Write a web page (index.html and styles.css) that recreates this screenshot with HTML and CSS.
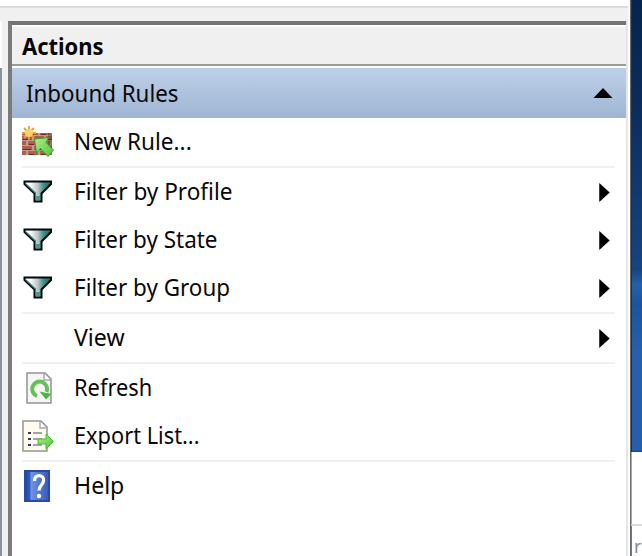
FILE: index.html
```
<!DOCTYPE html>
<html lang="en">
<head>
<meta charset="utf-8">
<title>Actions</title>
<link rel="stylesheet" href="styles.css">
</head>
<body>
<svg width="0" height="0" class="defs">
  <defs>
    <linearGradient id="metal"><stop offset=".2" stop-color="#fff"/><stop offset=".5" stop-color="#bfc5c5"/><stop offset=".72" stop-color="#38908c"/><stop offset="1" stop-color="#216f70"/></linearGradient>
    <linearGradient id="green" x2="1" y2="1"><stop stop-color="#b0f08c"/><stop offset="1" stop-color="#4fc238"/></linearGradient>
    <linearGradient id="blue"><stop stop-color="#1c48ad"/><stop offset=".2" stop-color="#2d5bc2"/><stop offset=".25" stop-color="#6f94e0"/><stop offset="1" stop-color="#3558bb"/></linearGradient>
    <pattern id="bricks" width="12" height="10" patternUnits="userSpaceOnUse">
      <rect width="12" height="10" fill="#b9a097"/><path d="M0 0h10v4H0zM-6 5H4v4h-10zM6 5h10v4H6z" fill="#b0604a"/><path d="M1 3h8v1H1zM7 8h5v1H7z" fill="#65281f"/>
    </pattern>
    <symbol id="funnel" viewBox="0 0 32 32">
      <path d="M2.500 5.500H29V8L19.500 17.500V25.500H12.500V17.500L2.500 8Z" fill="url(#metal)" stroke="#050808" stroke-width="2"/>
      <path d="M4 8L13.500 17V19" stroke="#39817d" stroke-width="1.200" fill="none"/><path d="M14 20h4v4h-4z" fill="#469b97"/>
    </symbol>
  </defs>
</svg>
<div class="screen">
  <div class="topbar"></div>
  <div class="window">
    <div class="scroll-edge"></div>
    <main class="panel">
      <header class="title"><span>Actions</span></header>
      <div class="group"><span class="t-inbound">Inbound Rules</span><svg width="20" height="12" viewBox="0 0 20 12"><path d="M.5 11L10 1l9.500 10z"/></svg></div>
      <ul class="menu">
        <li class="ruled"><svg class="icon" viewBox="0 0 32 32">
          <path d="M0 7h30v22H0z" fill="url(#bricks)"/><path d="M26 7h4v22h-4z" fill="#60332c" opacity=".45"/>
          <g stroke="#e6a036" stroke-width="1.800"><path d="M7 0v14M0 7h14M2 2l10 10M12 2L2 12"/></g><circle cx="7" cy="7" r="4" fill="#ffcf68"/>
          <path d="M12.500 13L26.500 11.500 24 16.500 31.500 24 26 30.500 18.500 22.500 14.500 27Z" fill="url(#green)" stroke="#3b9b2b"/>
        </svg><span class="t-new">New Rule...</span></li>
        <li><svg class="icon"><use href="#funnel"/></svg><span class="t-profile">Filter by Profile</span><svg class="arrow" viewBox="0 0 11 20"><path d="M0 0l11 10L0 20z"/></svg></li>
        <li><svg class="icon"><use href="#funnel"/></svg><span class="t-state">Filter by State</span><svg class="arrow" viewBox="0 0 11 20"><path d="M0 0l11 10L0 20z"/></svg></li>
        <li class="ruled"><svg class="icon"><use href="#funnel"/></svg><span class="t-group">Filter by Group</span><svg class="arrow" viewBox="0 0 11 20"><path d="M0 0l11 10L0 20z"/></svg></li>
        <li class="ruled"><i class="icon"></i><span class="t-view">View</span><svg class="arrow" viewBox="0 0 11 20"><path d="M0 0l11 10L0 20z"/></svg></li>
        <li><svg class="icon" viewBox="0 0 32 32">
          <path d="M5 1H23L29 7V31H5Z" fill="#f6f6f7" stroke="#929292" stroke-width="1.500"/><path d="M22 2v6h6" fill="#fff" stroke="#aaa" stroke-width="1.500"/>
          <path d="M15 24A7.500 7.500 0 1 1 24.500 20" fill="none" stroke="#62c254" stroke-width="4"/><path d="M17.500 19.500L29.500 22 24 27.500Z" fill="#4eb341"/>
        </svg><span class="t-refresh">Refresh</span></li>
        <li class="ruled"><svg class="icon" viewBox="0 0 32 32">
          <path d="M1 1H19L25 7V31H1Z" fill="#fffbed" stroke="#969492" stroke-width="1.500"/><path d="M18 2v6h6" fill="#fff" stroke="#aaa" stroke-width="1.500"/>
          <path d="M6 13h3M6 19h3M6 25h3" stroke="#37375c" stroke-width="2"/><path d="M11 13h9M11 19h9M11 25h9" stroke="#87839b" stroke-width="1.500"/>
          <path d="M16 19h8v-5l7.500 7.500L24 29v-5h-8z" fill="url(#green)" stroke="#4bb936"/>
        </svg><span class="t-export">Export List...</span></li>
        <li><svg class="icon" viewBox="0 0 32 32">
          <path d="M3 1h24v30H3z" fill="url(#blue)" stroke="#294aa1" stroke-width="2"/><path d="M12.500 11C12 3 23 4.500 21.500 11 21 15 17 15.500 17 20.500" stroke="#fff" stroke-width="3.200" fill="none"/><circle cx="17" cy="26" r="2.200" fill="#fff"/>
        </svg><span class="t-help">Help</span></li>
      </ul>
    </main>
    <div class="window-edge"></div>
  </div>
  <aside class="desktop"><div class="wallpaper"></div><div class="behind"></div><div class="behind-text">r</div></aside>
</div>
</body>
</html>
```
FILE: styles.css
```
* { box-sizing: border-box; }
body { margin: 0; width: 642px; height: 556px; overflow: hidden; background: #fff; color: #080808; font: 24px/46px "Noto Sans", "Open Sans", sans-serif; }
.defs { position: absolute; }
svg { display: block; flex: none; }
.screen { display: grid; grid-template: 20px 536px / 630px 12px; }
.topbar { background: linear-gradient(#fff 6px, #dcdcdc 6px 8px, #f0f0f0 8px); border-right: 2px solid #f7f7f7; }
.window { grid-row: 2; display: flex; background: #f0f0f0; padding-top: 1px; }
.scroll-edge { width: 8px; background: linear-gradient(90deg, #fff 2px, transparent 2px) 0 0 / 8px 47px no-repeat, linear-gradient(90deg, #8c919e 2px, #f0f0f0 2px); }
.panel { width: 618px; background: #fff; border: 0 solid #777; border-width: 4px 0 0 4px; border-top-color: #747474; border-left-color: #7b7b7b; }
.title { height: 41px; border: solid #999; border-width: 0 0 2px; border-top: 2px solid #fff; background: #f0f0f0; padding-left: 10px; font-weight: 700; line-height: 37px; }
.title span { display: inline-block; transform: scaleX(.915); transform-origin: left; }
.group { height: 52px; border-top: 2px solid #fff; padding: 0 13px 0 14px; display: flex; align-items: center; justify-content: space-between; background: linear-gradient(#bdd0e9, #9fb5d2); background-clip: padding-box; }
.menu { list-style: none; margin: 0; padding: 0 11px 0 10px; }
li { height: 48px; display: flex; align-items: center; }
.ruled { height: 50px; border-bottom: 2px solid #f0f0f0; }
.icon { width: 32px; height: 32px; margin-right: 20px; }
li span, .group span { display: block; white-space: nowrap; transform: scaleX(.935); transform-origin: left; }
li span { padding-bottom: 2px; }
.group .t-inbound { transform: scaleX(.93); }
li .t-profile, li .t-new { transform: scaleX(.94); }
li .t-view, li .t-help { transform: scaleX(.963); }
li .t-refresh { transform: scaleX(.91); }
li .t-export { transform: scaleX(.907); }
.arrow { width: 11px; height: 19px; margin-left: auto; margin-right: 5px; }
.window-edge { width: 4px; background: linear-gradient(90deg, #e5e5e5 2px, #fff 2px); }
.desktop { grid-column: 2; grid-row: 1 / 3; border-left: 1px solid #656b70; }
.wallpaper { height: 452px; border-left: 1px solid #123250; background: linear-gradient(#05254e, #0b2c5b 100px, #153e77 230px, #17447f 270px, #2561ac 285px, #1d529e 305px, #2460ab 350px, #245fac 450px, #1b4681); }
.behind { height: 74px; border-left: 1px solid #aaa; border-bottom: 2px solid #ddd; }
.behind-text { height: 30px; border-left: 1px solid #777; padding-left: 2px; color: #888; font-size: 18px; line-height: 40px; }
```
